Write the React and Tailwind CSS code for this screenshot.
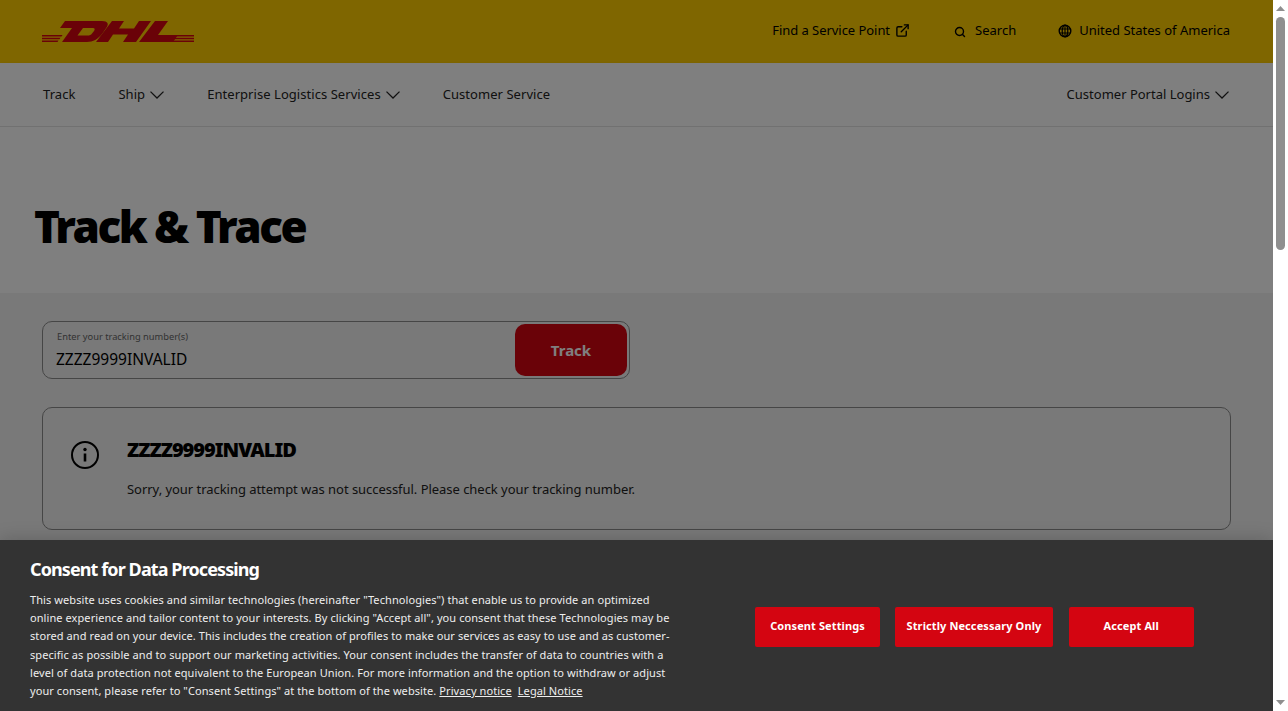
import { Search, ExternalLink } from "lucide-react";

const font = "font-['Noto_Sans',sans-serif]";

function DhlLogo() {
  return (
    <svg width="152" height="21" viewBox="0 0 152 21" className="block">
      <g fill="#d40511">
        <path d="M0 14h20.500l-1 1.500H0zM0 16.800h18.500l-1 1.500H0zM0 19.500h16.500l-1 1.500H0z" />
        <path d="M152 14h-17l-1 1.500h18zM152 16.800h-19l-1 1.500h20zM152 19.500h-21l-1 1.500h22z" />
        <path
          fillRule="evenodd"
          d="M23 0H60C66 0 67 3 64.500 6.500L60 13C56 18 51 21 45 21H20L30 7H18zM41 7H51C53 7 53 8.500 52 10L50 12.500C49 14 47.500 14.500 45.500 14.500H35.500z"
        />
        <path d="M70 0H82L77 7.500H92L97 0H109L94 21H81L86 13.500H71L66 21H54z" />
        <path d="M113 0H126L116 14H136L131 21H97z" />
      </g>
    </svg>
  );
}

function Chevron() {
  return (
    <svg width="14" height="8" viewBox="0 0 14 8" fill="none" stroke="#222" strokeWidth="1.3">
      <path d="M.5.6 7 7 13.500.6" />
    </svg>
  );
}

function GlobeIcon() {
  return (
    <svg width="14" height="14" viewBox="0 0 14 14" fill="none" stroke="#000">
      <circle cx="7" cy="7" r="5.800" strokeWidth="1.400" />
      <ellipse cx="7" cy="7" rx="2.800" ry="5.800" strokeWidth="1.200" />
      <path d="M7 1v12M1.500 5h11M1.500 9h11" strokeWidth="1.100" />
    </svg>
  );
}

function InfoIcon() {
  return (
    <svg width="28" height="28" viewBox="0 0 28 28" fill="none" stroke="#000">
      <circle cx="14" cy="14" r="13" strokeWidth="2" />
      <path d="M14 12.500v8" strokeWidth="2.600" />
      <circle cx="14" cy="8.500" r="1.700" fill="#000" stroke="none" />
    </svg>
  );
}

function Scrollbar() {
  return (
    <div className="w-[15px] shrink-0 bg-white flex flex-col items-center">
      <svg width="15" height="17" viewBox="0 0 15 17" className="shrink-0">
        <path d="M3 11l4.500-5 4.500 5z" fill="#8f8f8f" />
      </svg>
      <div className="w-[9px] h-[233px] rounded-full bg-[#8f8f8f]"></div>
      <div className="flex-1"></div>
      <svg width="15" height="17" viewBox="0 0 15 17" className="shrink-0">
        <path d="M3 6l4.500 5 4.500-5z" fill="#8f8f8f" />
      </svg>
    </div>
  );
}

function NavItem({ label, chevron }) {
  return (
    <a className="flex items-center gap-[5px] text-[13px] text-[#222]">
      {label}
      {chevron && <Chevron />}
    </a>
  );
}

export default function App() {
  return (
    <div className={`flex h-[711px] w-[1288px] overflow-hidden bg-white ${font}`}>
      <div className="relative w-[1273px] h-full overflow-hidden bg-white">
        <header className="h-[63px] bg-[#ffcc00] pl-[42px] pr-[43px] flex items-center justify-between">
          <DhlLogo />
          <div className="flex items-center text-[13px] text-black pb-[2px]">
            <a className="flex items-center gap-[5px]">
              <span className="tracking-[-0.05px]">Find a Service Point</span>
              <ExternalLink size={15} strokeWidth={2.2} />
            </a>
            <a className="flex items-center gap-[9px] ml-[44px]">
              <Search size={12} strokeWidth={2.8} className="mt-[2px]" /> Search
            </a>
            <a className="flex items-center gap-[7px] ml-[42px]">
              <GlobeIcon /> United States of America
            </a>
          </div>
        </header>
        <nav className="h-[64px] bg-white border-b border-[#e2e2e2] shadow-sm pl-[43px] pr-[44px] flex items-center justify-between">
          <div className="flex items-center gap-[43px] tracking-[0.05px]">
            <NavItem label="Track" />
            <NavItem label="Ship" chevron />
            <NavItem label="Enterprise Logistics Services" chevron />
            <NavItem label="Customer Service" />
          </div>
          <NavItem label="Customer Portal Logins" chevron />
        </nav>
        <section className="h-[166px] bg-white pl-[34px] pt-[71px]">
          <h1 className="text-[44px] leading-[56px] font-black text-black tracking-[-2.5px]">Track &amp; Trace</h1>
        </section>
        <main className="h-[418px] bg-[#f2f2f2] px-[42px] pt-[28px]">
          <div className="w-[588px] h-[58px] rounded-[10px] border border-[#8c8c8c] bg-[#f2f2f2] flex items-stretch p-[2px] pl-[13px]">
            <div className="flex-1 flex flex-col">
              <label className="text-[9.300px] leading-[12px] mt-[7px] text-[#666] ml-[1px]">Enter your tracking number(s)</label>
              <div className="text-[15.500px] leading-[20px] mt-[6px] text-black">ZZZZ9999INVALID</div>
            </div>
            <button className="w-[112px] rounded-[10px] bg-[#d40511] text-white font-bold text-[15px]">Track</button>
          </div>
          <div className="mt-[28px] h-[123px] rounded-[10px] border border-[#8c8c8c] flex">
            <div className="w-[84px] pl-[28px] pt-[33px]">
              <InfoIcon />
            </div>
            <div className="pt-[27px]">
              <h2 className="text-[20px] leading-[30px] font-black tracking-[-1px] text-black">ZZZZ9999INVALID</h2>
              <p className="text-[13px] leading-[20px] mt-[14px] tracking-[-0.04px] text-[#222]">Sorry, your tracking attempt was not successful. Please check your tracking number.</p>
            </div>
          </div>
        </main>
        <div className="absolute inset-0 bg-black/50"></div>
        <div className="absolute left-0 right-0 bottom-0 h-[171px] bg-[#333] text-white flex shadow-[0_0_18px_rgba(0,0,0,0.2)]">
          <div className="w-[755px] pl-[30px] pt-[17px]">
            <h3 className="text-[18px] leading-[24px] font-bold tracking-[-0.9px]">Consent for Data Processing</h3>
            <p className="mt-[10px] text-[11px] leading-[18.200px] tracking-[0.08px] text-[#eee] whitespace-nowrap">
              This website uses cookies and similar technologies (hereinafter "Technologies") that enable us to provide an optimized<br />
              online experience and tailor content to your interests. By clicking "Accept all", you consent that these Technologies may be<br />
              stored and read on your device. This includes the creation of profiles to make our services as easy to use and as customer-<br />
              specific as possible and to support our marketing activities. Your consent includes the transfer of data to countries with a<br />
              level of data protection not equivalent to the European Union. For more information and the option to withdraw or adjust<br />
              your consent, please refer to "Consent Settings" at the bottom of the website.{" "}
              <a className="underline">Privacy notice</a>
              <a className="underline ml-[6px]">Legal Notice</a>
            </p>
          </div>
          <div className="flex items-start gap-[15px] pt-[67px]">
            <button className="w-[125px] h-[40px] pb-[1px] rounded-[2px] bg-[#d40511] text-[11px] tracking-[0.1px] font-bold">Consent Settings</button>
            <button className="w-[158px] h-[40px] pb-[1px] rounded-[2px] bg-[#d40511] text-[11px] tracking-[0.1px] font-bold">Strictly Neccessary Only</button>
            <button className="w-[124.500px] h-[40px] pb-[1px] ml-[1px] rounded-[2px] bg-[#d40511] text-[11px] tracking-[0.1px] font-bold">Accept All</button>
          </div>
        </div>
      </div>
      <Scrollbar />
    </div>
  );
}
